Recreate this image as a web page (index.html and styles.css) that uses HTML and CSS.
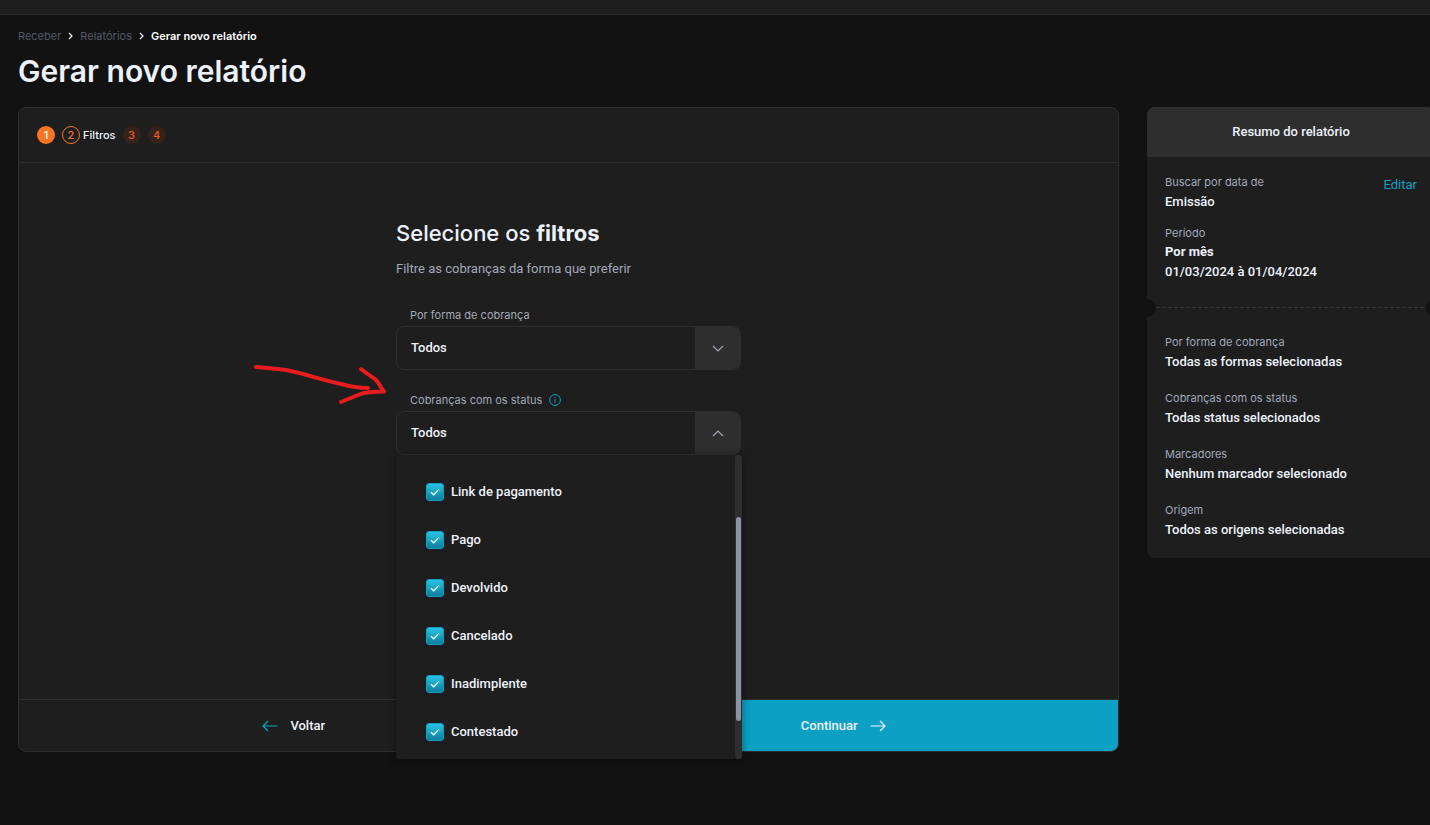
FILE: index.html
```html
<!DOCTYPE html>
<html lang="pt-BR">
<head>
<meta charset="utf-8">
<meta name="viewport" content="width=device-width, initial-scale=1">
<title>Gerar novo relatório</title>
<link rel="stylesheet" href="styles.css">
</head>
<body>
<div class="topbar"></div>
<main class="page">
  <nav class="breadcrumb">
    <a href="#">Receber</a>
    <svg width="5" height="8" viewBox="0 0 5 8"><path d="M1 1l3 3-3 3"/></svg>
    <a href="#">Relatórios</a>
    <svg width="5" height="8" viewBox="0 0 5 8"><path d="M1 1l3 3-3 3"/></svg>
    <span class="current">Gerar novo relatório</span>
  </nav>
  <h1 class="page-title">Gerar novo relatório</h1>
  <div class="columns">
    <section class="card">
      <ol class="steps">
        <li><span class="dot done">1</span></li>
        <li><span class="dot active">2</span><span class="step-name">Filtros</span></li>
        <li><span class="dot">3</span></li>
        <li><span class="dot">4</span></li>
      </ol>
      <div class="card-body">
        <form class="form">
          <h2 class="form-title">Selecione os <strong>filtros</strong></h2>
          <p class="form-text">Filtre as cobranças da forma que preferir</p>
          <div class="field">
            <label class="label" for="forma">Por forma de cobrança</label>
            <div class="control">
              <select id="forma" class="value"><option>Todos</option></select>
              <span class="toggle"><svg width="12" height="7" viewBox="0 0 12 7"><path d="M1 1l5 5 5-5"/></svg></span>
            </div>
          </div>
          <div class="field">
            <div class="label" id="status-label">Cobranças com os status
              <svg class="info" width="12" height="12" viewBox="0 0 12 12"><circle cx="6" cy="6" r="5.4"/><path d="M6 5.2v3.6M6 3v1"/></svg>
            </div>
            <div class="control">
              <button type="button" class="value" aria-labelledby="status-label" aria-expanded="true">Todos</button>
              <span class="toggle"><svg width="12" height="7" viewBox="0 0 12 7"><path d="M1 6l5-5 5 5"/></svg></span>
            </div>
            <div class="menu">
              <div class="options">
                <label class="option"><span class="check"><input type="checkbox" checked><svg width="10" height="8" viewBox="0 0 10 8"><path d="M1 4.2l2.7 2.6L9 1.2"/></svg></span>Link de pagamento</label>
                <label class="option"><span class="check"><input type="checkbox" checked><svg width="10" height="8" viewBox="0 0 10 8"><path d="M1 4.2l2.7 2.6L9 1.2"/></svg></span>Pago</label>
                <label class="option"><span class="check"><input type="checkbox" checked><svg width="10" height="8" viewBox="0 0 10 8"><path d="M1 4.2l2.7 2.6L9 1.2"/></svg></span>Devolvido</label>
                <label class="option"><span class="check"><input type="checkbox" checked><svg width="10" height="8" viewBox="0 0 10 8"><path d="M1 4.2l2.7 2.6L9 1.2"/></svg></span>Cancelado</label>
                <label class="option"><span class="check"><input type="checkbox" checked><svg width="10" height="8" viewBox="0 0 10 8"><path d="M1 4.2l2.7 2.6L9 1.2"/></svg></span>Inadimplente</label>
                <label class="option"><span class="check"><input type="checkbox" checked><svg width="10" height="8" viewBox="0 0 10 8"><path d="M1 4.2l2.7 2.6L9 1.2"/></svg></span>Contestado</label>
              </div>
              <div class="track"><div class="thumb"></div></div>
            </div>
            <svg class="pointer" width="140" height="48" viewBox="0 0 140 48"><path d="M6 7C18 8 28 9 36 10C56 14 72 20 91 24C102 27 108 28 118 28M111 9C118 15 122 16 127 21C130 25 131 28 134 31.500C121 32 114 32 108 35L91 42"/></svg>
          </div>
        </form>
      </div>
      <div class="actions">
        <button type="button" class="action back"><svg width="16" height="12" viewBox="0 0 16 12"><path d="M15.500 6H1M6 1L1 6l5 5"/></svg>Voltar</button>
        <button type="button" class="action next">Continuar<svg width="16" height="12" viewBox="0 0 16 12"><path d="M.5 6H15M10 1l5 5-5 5"/></svg></button>
      </div>
    </section>
    <aside class="summary">
      <h3 class="summary-title">Resumo do relatório</h3>
      <div class="block">
        <a class="edit" href="#">Editar</a>
        <dl class="list tight">
          <div><dt>Buscar por data de</dt><dd>Emissão</dd></div>
          <div><dt>Período</dt><dd><strong>Por mês</strong></dd><dd>01/03/2024 à 01/04/2024</dd></div>
        </dl>
      </div>
      <div class="tear"></div>
      <dl class="list">
        <div><dt>Por forma de cobrança</dt><dd>Todas as formas selecionadas</dd></div>
        <div><dt>Cobranças com os status</dt><dd>Todas status selecionados</dd></div>
        <div><dt>Marcadores</dt><dd>Nenhum marcador selecionado</dd></div>
        <div><dt>Origem</dt><dd>Todos as origens selecionadas</dd></div>
      </dl>
    </aside>
  </div>
</main>
</body>
</html>
```
FILE: styles.css
```css
* { box-sizing: border-box; margin: 0; padding: 0; }
:root {
  --bg: #121212;
  --panel: #1e1e1e;
  --line: #2e2e2e;
  --text: #edf2fa;
  --muted: #a2a8b8;
  --blue: #0ca1c4;
  --orange: #f97421;
  --display: Inter, "Liberation Sans", sans-serif;
}
body {
  min-height: 100vh;
  background: var(--bg);
  color: var(--text);
  font: 500 13px/20px Roboto, "Liberation Sans", sans-serif;
  overflow-x: hidden;
}
button, select { font: inherit; color: inherit; background: none; border: 0; }
a { text-decoration: none; color: inherit; }
svg { flex: none; fill: none; stroke: currentColor; stroke-width: 1.2; }
.topbar { height: 15px; background: var(--panel); border-bottom: 1px solid var(--line); }
.page { padding: 13px 0 0 18px; margin-right: -5px; }

.breadcrumb { display: flex; align-items: center; gap: 7px; font-family: var(--display); font-size: 11px; line-height: 16px; color: #505a6c; font-weight: 400; }
.breadcrumb svg { color: var(--text); }
.breadcrumb .current { color: #fff; font-weight: 600; }
.page-title { font-family: var(--display); font-size: 30px; line-height: 36px; font-weight: 600; margin: 9px 0 18px; }

.columns { display: grid; grid-template-columns: 1fr 288px; gap: 28px; align-items: start; }
.card { background: var(--panel); border: 1px solid var(--line); border-radius: 8px; }
.steps { display: flex; align-items: center; gap: 7px; height: 55px; padding: 0 18px; list-style: none; border-bottom: 1px solid var(--line); font-family: var(--display); font-size: 11px; }
.steps li { display: flex; align-items: center; gap: 3px; }
.dot { width: 18px; height: 18px; border-radius: 50%; display: grid; place-items: center; line-height: 16px; background: #33231b; color: #e95a24; }
.dot.done { background: var(--orange); color: #fff; }
.dot.active { background: none; border: 1px solid var(--orange); color: var(--orange); }

.card-body { min-height: 536px; padding: 56px 20px 0; }
.form { width: 100%; max-width: 345px; margin: 0 auto; }
.form-title { font-family: var(--display); font-size: 22px; line-height: 28px; font-weight: 500; }
.form-title strong { font-weight: 700; }
.form-text { margin: 12px 0 26px; color: var(--muted); font-weight: 400; }
.field { position: relative; margin-bottom: 20px; }
.label { display: flex; align-items: center; gap: 7px; height: 20px; padding-left: 14px; font-family: var(--display); font-size: 11px; font-weight: 400; color: var(--muted); }
.info { color: var(--blue); stroke-width: 1; }
.control { display: grid; grid-template-columns: 1fr 45px; height: 44px; margin-top: 1px; border: 1px solid var(--line); border-radius: 8px; overflow: hidden; }
.value { grid-area: 1 / 1 / 2 / 3; appearance: none; padding: 0 14px; text-align: left; }
.toggle { grid-area: 1 / 2; display: grid; place-items: center; background: var(--line); color: var(--muted); pointer-events: none; }

.menu { position: absolute; top: 100%; left: 0; right: -1px; z-index: 2; display: flex; background: var(--panel); border-radius: 4px; box-shadow: 0 2px 10px rgba(0, 0, 0, .4); }
.options { flex: 1; padding: 13px 0 3px 30px; }
.option { display: flex; align-items: center; gap: 7px; height: 48px; }
.check { display: grid; place-items: center; color: #fff; }
.check > * { grid-area: 1 / 1; }
.check svg { z-index: 1; pointer-events: none; }
.check input { appearance: none; width: 18px; height: 18px; border: 1px solid var(--blue); border-radius: 3px; background: linear-gradient(#2ac3e4, #07809d); }
.track { width: 7px; padding: 62px 1px 38px; background: var(--line); border-radius: 4px; }
.thumb { height: 100%; background: #8c92a5; border-radius: 3px; }
.pointer { position: absolute; right: 100%; margin-right: 6px; top: -30px; color: #e81c1c; stroke-width: 4; stroke-linecap: round; stroke-linejoin: round; }

.actions { display: grid; grid-template-columns: 1fr 1fr; height: 52px; border-top: 1px solid var(--line); }
.action { display: flex; align-items: center; justify-content: center; gap: 12px; }
.back svg { color: var(--blue); }
.next { background: var(--blue); border-bottom-right-radius: 7px; }

.summary { background: var(--panel); border-radius: 8px; overflow: hidden; }
.summary-title { height: 50px; background: var(--line); text-align: center; font-size: 13px; line-height: 50px; font-weight: 500; }
.block { position: relative; }
.edit { position: absolute; right: 18px; top: 18px; color: var(--blue); font-weight: 400; }
.list { display: grid; gap: 16px; padding: 24px 18px 18px; }
.list.tight { gap: 12px; padding: 15px 18px 25px; }
.list dt { font-family: var(--display); font-size: 11px; font-weight: 400; color: var(--muted); }
.tight div + div dt { line-height: 18px; }
.tear { display: flex; align-items: center; justify-content: space-between; height: 1px; margin: 0 -9px; background: repeating-linear-gradient(90deg, #343434 0 4px, transparent 4px 6px); }
.tear::before, .tear::after { content: ""; flex: none; width: 18px; height: 18px; border-radius: 50%; background: var(--bg); }
```
